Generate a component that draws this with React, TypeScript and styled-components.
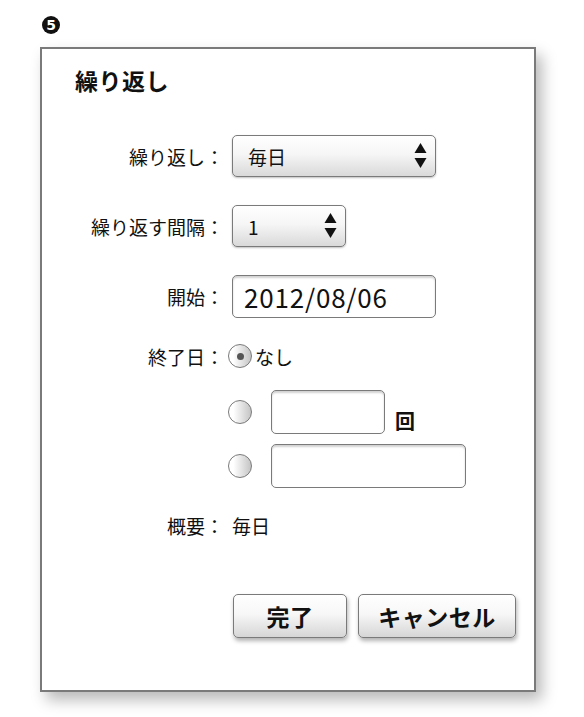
import React from "react";
import styled, { createGlobalStyle } from "styled-components";

const Global = createGlobalStyle`
  html, body { margin: 0; padding: 0; background: #fff; }
  body { font-family: "Noto Sans CJK JP", "Noto Sans", sans-serif; color: #111; }
`;

const Page = styled.div`
  width: 584px;
  height: 717px;
  overflow: hidden;
  display: flex;
  flex-direction: column;
`;

const BadgeRow = styled.div`
  height: 30px;
  padding: 16px 0 0 42px;
  box-sizing: border-box;
`;

const Badge = styled.span`
  display: flex;
  align-items: center;
  justify-content: center;
  width: 18px;
  height: 18px;
  border-radius: 50%;
  background: #111;
  color: #fff;
  font-family: "DejaVu Sans", sans-serif;
  font-weight: bold;
  font-size: 14px;
  line-height: 1;
`;

const Panel = styled.div`
  margin: 17px 0 0 40px;
  width: 496px;
  height: 645px;
  box-sizing: border-box;
  border: 2px solid #7a7a7a;
  background: #fff;
  box-shadow: 6px 8px 14px rgba(0, 0, 0, 0.28);
  display: flex;
  flex-direction: column;
`;

const Title = styled.h1`
  margin: 16px 0 0 33px;
  font-size: 23px;
  line-height: 30px;
  font-weight: bold;
  letter-spacing: 0.5px;
`;

const Form = styled.div`
  display: grid;
  grid-template-columns: 182px 1fr;
  column-gap: 4px;
  margin-top: 40px;
`;

const Label = styled.div<{ $top: number; $h: number }>`
  margin-top: ${(p) => p.$top}px;
  height: ${(p) => p.$h}px;
  display: flex;
  align-items: center;
  justify-content: flex-end;
  font-size: 19px;
  white-space: nowrap;
`;

const Cell = styled.div<{ $top: number; $h: number }>`
  margin-top: ${(p) => p.$top}px;
  height: ${(p) => p.$h}px;
  display: flex;
  align-items: center;
`;

const Select = styled.div<{ $w: number }>`
  margin-left: 4px;
  width: ${(p) => p.$w}px;
  height: 42px;
  box-sizing: border-box;
  border: 1.5px solid #7a7a7a;
  border-radius: 5px;
  background: linear-gradient(#ffffff 0%, #f6f6f6 45%, #d9d9d9 100%);
  box-shadow: 0 1px 2px rgba(0, 0, 0, 0.25);
  display: flex;
  align-items: center;
  justify-content: space-between;
  padding: 0 8px 0 15px;
  font-size: 19px;
`;

const Arrows = styled.svg`
  width: 13px;
  height: 28px;
`;

const TextBox = styled.div<{ $w: number; $big?: boolean }>`
  margin-left: ${(p) => (p.$big ? 4 : 0)}px;
  width: ${(p) => p.$w}px;
  height: ${(p) => (p.$big ? 43 : 44)}px;
  box-sizing: border-box;
  border: 1.5px solid #7a7a7a;
  border-radius: 5px;
  background: #fff;
  box-shadow: inset 0 2px 2px rgba(0, 0, 0, 0.18);
  display: flex;
  align-items: center;
  padding-left: 11px;
  font-size: 26px;
  letter-spacing: 0.8px;
`;

const Radio = styled.span<{ $on?: boolean }>`
  position: relative;
  flex: none;
  width: 24px;
  height: 24px;
  box-sizing: border-box;
  border-radius: 50%;
  border: 1.5px solid #7a7a7a;
  background: linear-gradient(90deg, #ffffff 20%, #c4c4c4 100%);
  &::after {
    content: "";
    display: ${(p) => (p.$on ? "block" : "none")};
    position: absolute;
    left: 50%;
    top: 50%;
    width: 7px;
    height: 7px;
    margin: -3.5px 0 0 -3.5px;
    border-radius: 50%;
    background: #555;
  }
`;

const RadioText = styled.span`
  margin-left: 3px;
  font-size: 19px;
`;

const Spacer = styled.span<{ $w: number }>`
  width: ${(p) => p.$w}px;
  flex: none;
`;

const Unit = styled.span`
  margin: 16px 0 0 10px;
  font-size: 20px;
  font-weight: bold;
`;

const Value = styled.span`
  margin-left: 4px;
  font-size: 19px;
`;

const Buttons = styled.div`
  margin-left: 5px;
  display: flex;
  gap: 11px;
`;

const Button = styled.button<{ $w: number }>`
  width: ${(p) => p.$w}px;
  height: 44px;
  box-sizing: border-box;
  border: 1.5px solid #7a7a7a;
  border-radius: 5px;
  background: linear-gradient(#ffffff 0%, #f7f7f7 45%, #d6d6d6 100%);
  box-shadow: 1px 3px 4px rgba(0, 0, 0, 0.3);
  font-family: "Noto Sans CJK JP", sans-serif;
  font-size: 23px;
  font-weight: bold;
  color: #111;
  padding: 0;
  letter-spacing: 0.5px;
`;

const UpDown = () => (
  <Arrows viewBox="0 0 13 28">
    <polygon points="6.5,1 12.5,11 0.5,11" fill="#111" />
    <polygon points="0.5,16 12.5,16 6.5,26" fill="#111" />
  </Arrows>
);

export default function App() {
  return (
    <Page>
      <Global />
      <BadgeRow>
        <Badge>5</Badge>
      </BadgeRow>
      <Panel>
        <Title>繰り返し</Title>
        <Form>
          <Label $top={0} $h={42}>繰り返し：</Label>
          <Cell $top={0} $h={42}>
            <Select $w={204}>
              <span>毎日</span>
              <UpDown />
            </Select>
          </Cell>

          <Label $top={28} $h={42}>繰り返す間隔：</Label>
          <Cell $top={28} $h={42}>
            <Select $w={114}>
              <span>1</span>
              <UpDown />
            </Select>
          </Cell>

          <Label $top={28} $h={43}>開始：</Label>
          <Cell $top={28} $h={43}>
            <TextBox $w={204} $big>2012/08/06</TextBox>
          </Cell>

          <Label $top={25} $h={26}>終了日：</Label>
          <Cell $top={25} $h={26}>
            <Radio $on />
            <RadioText>なし</RadioText>
          </Cell>

          <Label $top={21} $h={44} />
          <Cell $top={21} $h={44}>
            <Radio />
            <Spacer $w={19} />
            <TextBox $w={114} />
            <Unit>回</Unit>
          </Cell>

          <Label $top={10} $h={44} />
          <Cell $top={10} $h={44}>
            <Radio />
            <Spacer $w={19} />
            <TextBox $w={195} />
          </Cell>

          <Label $top={24} $h={26}>概要：</Label>
          <Cell $top={24} $h={26}>
            <Value>毎日</Value>
          </Cell>

          <Label $top={56} $h={44} />
          <Cell $top={56} $h={44}>
            <Buttons>
              <Button $w={114}>完了</Button>
              <Button $w={158}>キャンセル</Button>
            </Buttons>
          </Cell>
        </Form>
      </Panel>
    </Page>
  );
}
